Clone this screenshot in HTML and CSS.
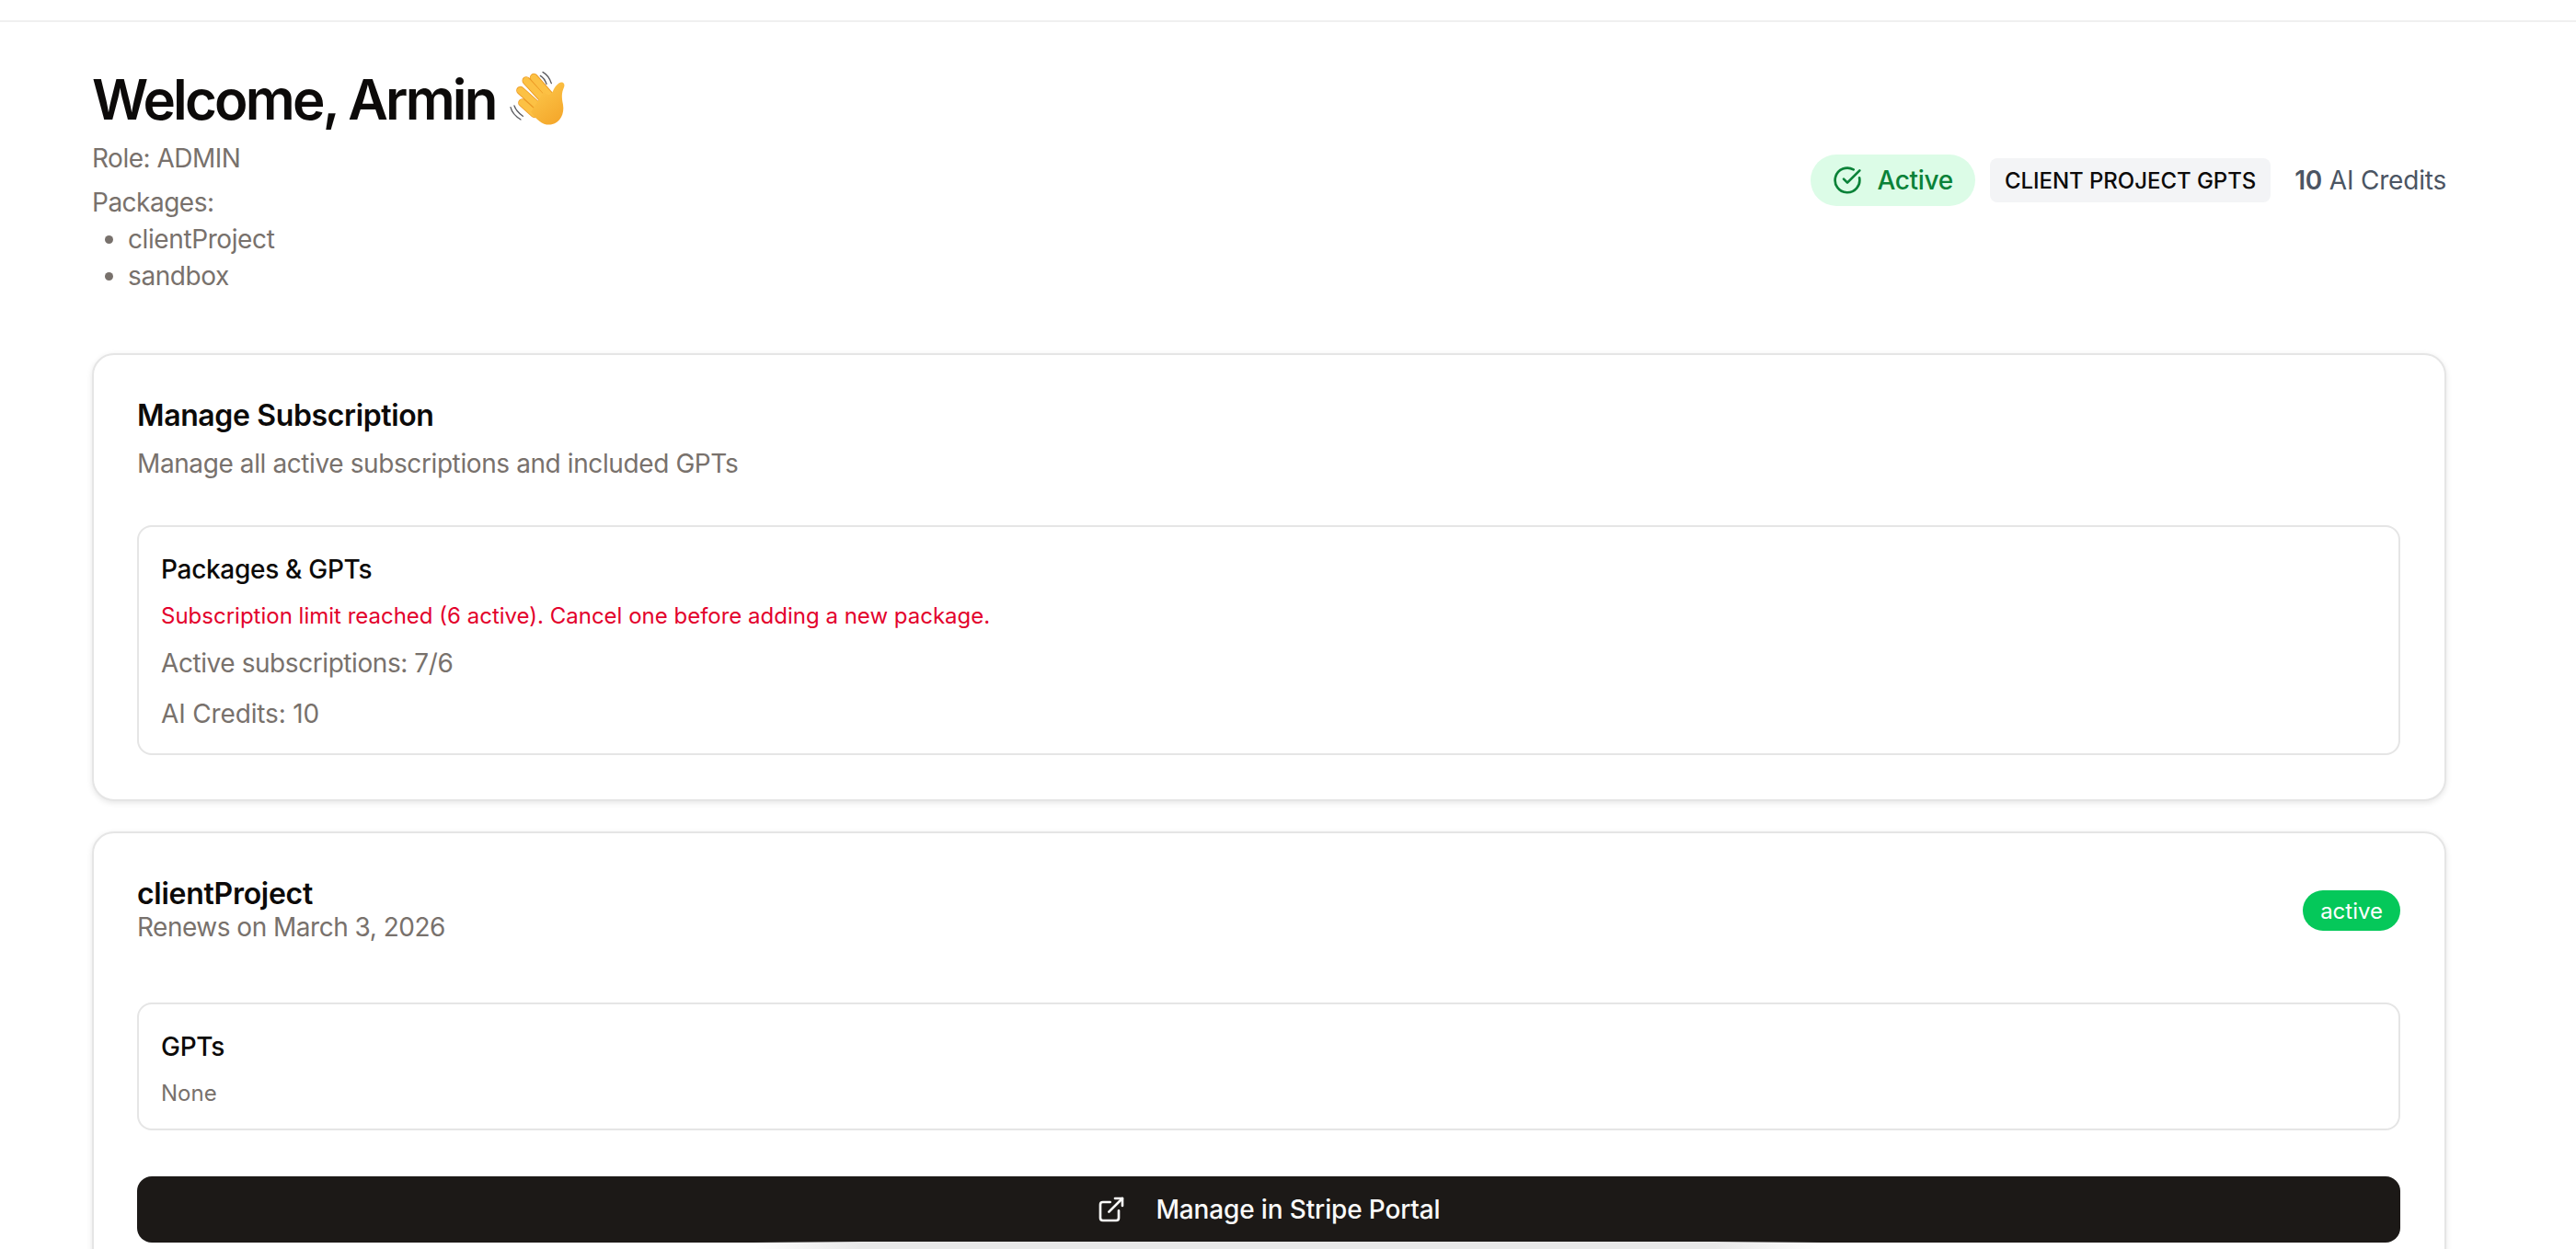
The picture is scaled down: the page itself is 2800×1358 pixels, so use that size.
FILE: index.html
```html
<!DOCTYPE html>
<html lang="en">
<head>
<meta charset="utf-8">
<title>Dashboard</title>
<link rel="stylesheet" href="styles.css">
</head>
<body>
<div class="topbar"></div>
<main class="page">
  <header class="head">
    <div class="head-left">
      <h1 class="title">Welcome, Armin
        <svg class="wave" viewBox="0 21 270 216" aria-hidden="true">
          <defs>
            <linearGradient id="palm" x1="0.2" y1="0" x2="0.8" y2="1">
              <stop offset="0" stop-color="#fdc84b"/>
              <stop offset="1" stop-color="#f4a62a"/>
            </linearGradient>
          </defs>
          <g fill="none" stroke="#5a5a5e" stroke-width="4" stroke-linecap="round">
            <path d="M147 40c14 8 23 21 28 37"/>
            <path d="M139 52c10 6 16 15 20 27"/>
            <path d="M42 155c4 16 15 29 33 40"/>
            <path d="M54 150c4 12 13 23 28 34"/>
          </g>
          <path d="M120 176 80 140M130 150 74 100M150 130 93 68M168 115 118 58" fill="none" stroke="#ec9a26" stroke-width="27" stroke-linecap="round"/>
          <path d="M120 176 80 140M130 150 74 100M150 130 93 68M168 115 118 58" fill="none" stroke="#fcc144" stroke-width="22" stroke-linecap="round"/>
          <path d="M108 170 150 105C163 115 170 118 178 106 184 94 190 80 204 74 215 71 220 80 216 90 208 108 208 122 213 146 218 176 204 204 176 211 150 216 128 198 108 170Z" fill="url(#palm)"/>
        </svg>
      </h1>
      <p class="meta">Role: ADMIN</p>
      <p class="meta">Packages:</p>
      <ul class="pkg-list">
        <li>clientProject</li>
        <li>sandbox</li>
      </ul>
    </div>
    <div class="head-right">
      <span class="status">
        <svg class="status-icon" viewBox="0 0 24 24" aria-hidden="true"><path d="M21.8 10A10 10 0 1 1 17 3.3"/><path d="m9 11 3 3L22 4"/></svg>
        Active
      </span>
      <span class="plan">CLIENT PROJECT GPTS</span>
      <span class="credits"><b>10</b> AI Credits</span>
    </div>
  </header>

  <section class="card">
    <h2 class="card-title">Manage Subscription</h2>
    <p class="card-sub">Manage all active subscriptions and included GPTs</p>
    <div class="inner inner-pack">
      <h3 class="inner-title">Packages &amp; GPTs</h3>
      <p class="warn">Subscription limit reached (6 active). Cancel one before adding a new package.</p>
      <p class="stat">Active subscriptions: 7/6</p>
      <p class="stat stat-credits">AI Credits: 10</p>
    </div>
  </section>

  <section class="card card-item">
    <div class="sub-head">
      <div>
        <h2 class="sub-name">clientProject</h2>
        <p class="renew">Renews on March 3, 2026</p>
      </div>
      <span class="badge">active</span>
    </div>
    <div class="inner inner-gpts">
      <h3 class="inner-title">GPTs</h3>
      <p class="none">None</p>
    </div>
    <button class="portal" type="button">
      <svg class="portal-icon" viewBox="0 0 24 24" aria-hidden="true"><path d="M15 3h6v6"/><path d="M10 14 21 3"/><path d="M18 13v6a2 2 0 0 1-2 2H5a2 2 0 0 1-2-2V8a2 2 0 0 1 2-2h6"/></svg>
      <span>Manage in Stripe Portal</span>
    </button>
  </section>
</main>
<div class="floater"></div>
</body>
</html>
```
FILE: styles.css
```css
* { box-sizing: border-box; }
html, body { margin: 0; padding: 0; height: 100%; overflow: hidden; }
body { background: #fff; font-family: Inter, "Liberation Sans", sans-serif; color: #0c0a09; position: relative; }
h1, h2, h3, p, ul { margin: 0; padding: 0; }
.topbar { height: 24px; border-bottom: 2px solid #f0f0f0; }
.page { padding: 48px 141px 0 100px; }
.head { display: flex; justify-content: space-between; align-items: center; margin-bottom: 64px; }
.title { font-size: 60px; line-height: 72px; font-weight: 600; letter-spacing: -2.8px; display: flex; align-items: center; gap: 2px; }
.wave { width: 90px; height: 72px; flex: none; }
.meta { font-size: 28px; line-height: 40px; color: #78716c; margin-top: 8px; letter-spacing: -.5px; }
.pkg-list { list-style: disc; padding-left: 39px; font-size: 28px; line-height: 40px; color: #78716c; letter-spacing: -.4px; }
.head-right { display: flex; align-items: center; gap: 16px; }
.status { display: inline-flex; align-items: center; gap: 16px; height: 56px; padding: 0 24px; border-radius: 28px; background: #dcfce7; color: #0a8238; font-size: 28px; font-weight: 500; letter-spacing: -.3px; }
.status-icon { width: 32px; height: 32px; fill: none; stroke: currentColor; stroke-width: 2; stroke-linecap: round; stroke-linejoin: round; }
.plan { display: inline-flex; align-items: center; height: 48px; padding: 0 16px; border-radius: 8px; background: #f3f4f6; font-size: 24px; font-weight: 500; color: #0c0a09; letter-spacing: -.05px; }
.credits { font-size: 28px; color: #4b5563; margin-left: 10px; letter-spacing: -.2px; }
.credits b { font-weight: 600; }
.card { border: 2px solid #e5e5e5; border-radius: 24px; padding: 48px 48px 48px 47px; background: #fff; box-shadow: 0 2px 6px rgba(0,0,0,.1); margin-bottom: 33px; }
.card-title { font-size: 32px; line-height: 40px; font-weight: 600; margin-top: -2px; letter-spacing: -.37px; }
.card-sub { font-size: 28px; line-height: 40px; color: #78716c; margin-top: 12px; letter-spacing: -.4px; }
.inner { border: 2px solid #e5e5e5; border-radius: 16px; padding: 26px 24px 23px; }
.inner-pack { margin-top: 47px; }
.inner-gpts { margin-top: 64px; padding-bottom: 22px; }
.inner-title { font-size: 28px; line-height: 40px; font-weight: 500; letter-spacing: -.3px; }
.warn { font-size: 24px; line-height: 32px; color: #e3002c; margin-top: 15px; }
.stat { font-size: 28px; line-height: 40px; color: #78716c; margin-top: 15px; letter-spacing: -.43px; }
.stat-credits { letter-spacing: -.15px; }
.sub-head { display: flex; justify-content: space-between; align-items: center; }
.sub-name { font-size: 32px; line-height: 36px; font-weight: 600; letter-spacing: -.28px; }
.renew { font-size: 28px; line-height: 36px; color: #78716c; letter-spacing: -.5px; }
.badge { display: inline-flex; align-items: center; height: 44px; padding: 0 19px; border-radius: 22px; background: #05c85a; color: #fff; font-size: 24px; font-weight: 400; }
.none { font-size: 24px; line-height: 32px; color: #78716c; margin-top: 15px; }
.portal { display: flex; width: 100%; height: 72px; margin-top: 50px; align-items: center; justify-content: center; gap: 32px; border: 0; border-radius: 16px; background: #1c1917; color: #fafaf9; font-family: inherit; font-size: 28px; font-weight: 500; letter-spacing: -.15px; }
.portal-icon { width: 32px; height: 32px; fill: none; stroke: currentColor; stroke-width: 2; stroke-linecap: round; stroke-linejoin: round; }
.floater { position: absolute; left: 820px; top: 1350px; width: 1160px; height: 8px; background: linear-gradient(to right, rgba(232,232,232,0), #e8e8e8 10%, #e8e8e8 90%, rgba(232,232,232,0)); }
```
